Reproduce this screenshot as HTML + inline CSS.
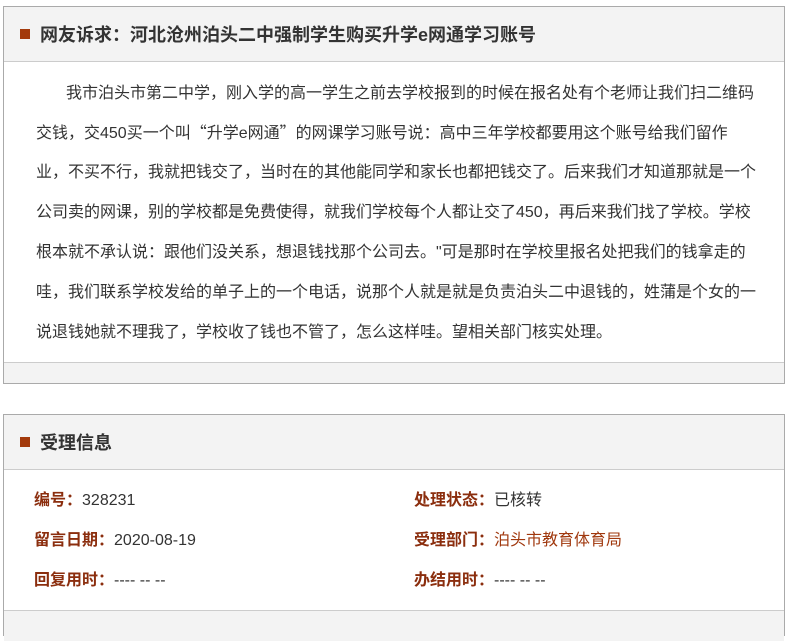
<!DOCTYPE html>
<html><head><meta charset="utf-8"><style>
body{margin:0;background:#fff;font-family:"Liberation Sans","Noto Sans CJK SC",sans-serif;width:791px;height:617px;overflow:hidden;position:relative}
.box{position:absolute;left:3px;width:780px;border:1px solid #aaa;background:#fff}
.hd{background:#f3f3f3;border-bottom:1px solid #ccc;position:relative}
.sq{position:absolute;left:16px;width:10px;height:10px;background:#a33a0c}
.tt{position:absolute;left:36px;font-size:18px;font-weight:bold;color:#333;white-space:nowrap}
.ln{position:absolute;left:32px;font-size:16px;color:#333;white-space:nowrap;line-height:20px;height:20px}
.ft{position:absolute;left:0;right:0;bottom:0;height:20px;background:#f3f3f3;border-top:1px solid #ccc}
.lb{color:#8b2e0e;font-weight:bold}
.it{position:absolute;font-size:16px;color:#333;white-space:nowrap;line-height:20px}
.q{font-family:"Noto Sans CJK SC",sans-serif;line-height:0}
</style></head><body>
<div class="box" style="top:6px;height:376px">
 <div class="hd" style="height:54px"><div class="sq" style="top:22px"></div><div class="tt" style="top:14px">网友诉求：河北沧州泊头二中强制学生购买升学e网通学习账号</div></div>
 <div class="ln" style="top:77px;left:62px">我市泊头市第二中学，刚入学的高一学生之前去学校报到的时候在报名处有个老师让我们扫二维码</div>
 <div class="ln" style="top:117px">交钱，交450买一个叫<span class="q">“</span>升学e网通<span class="q">”</span>的网课学习账号说：高中三年学校都要用这个账号给我们留作</div>
 <div class="ln" style="top:156px">业，不买不行，我就把钱交了，当时在的其他能同学和家长也都把钱交了。后来我们才知道那就是一个</div>
 <div class="ln" style="top:196px">公司卖的网课，别的学校都是免费使得，就我们学校每个人都让交了450，再后来我们找了学校。学校</div>
 <div class="ln" style="top:236px">根本就不承认说：跟他们没关系，想退钱找那个公司去。"可是那时在学校里报名处把我们的钱拿走的</div>
 <div class="ln" style="top:276px">哇，我们联系学校发给的单子上的一个电话，说那个人就是就是负责泊头二中退钱的，姓蒲是个女的一</div>
 <div class="ln" style="top:316px">说退钱她就不理我了，学校收了钱也不管了，怎么这样哇。望相关部门核实处理。</div>
 <div class="ft"></div>
</div>
<div class="box" style="top:414px;height:220px">
 <div class="hd" style="height:54px"><div class="sq" style="top:22px"></div><div class="tt" style="top:14px">受理信息</div></div>
 <div class="it" style="top:76px;left:30px"><span class="lb">编号：</span>328231</div>
 <div class="it" style="top:116px;left:30px"><span class="lb">留言日期：</span>2020-08-19</div>
 <div class="it" style="top:156px;left:30px"><span class="lb">回复用时：</span>---- -- --</div>
 <div class="it" style="top:76px;left:410px"><span class="lb">处理状态：</span>已核转</div>
 <div class="it" style="top:116px;left:410px"><span class="lb">受理部门：</span><span style="color:#a0380e">泊头市教育体育局</span></div>
 <div class="it" style="top:156px;left:410px"><span class="lb">办结用时：</span>---- -- --</div>
 <div style="position:absolute;left:0;right:0;top:195px;height:30px;background:#f3f3f3;border-top:1px solid #ccc"></div>
</div>
</body></html>
